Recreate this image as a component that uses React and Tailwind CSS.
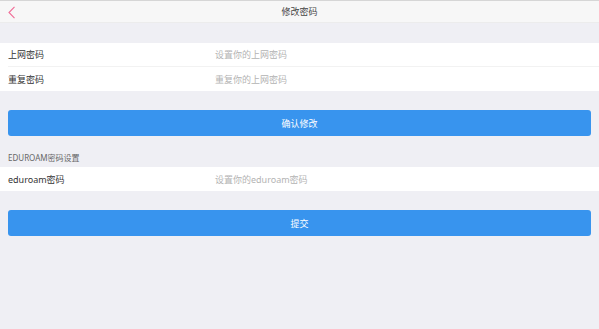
export default function App() {
  const font = { fontFamily: '"Noto Sans", "Noto Sans CJK SC", sans-serif' };
  return (
    <div className="w-full min-h-[329px] bg-[#efeff4]" style={font}>
      <div className="h-px bg-[#d6d6d6]" />
      <div className="h-[22px] bg-[#f7f7f7] flex items-center relative border-b border-[#ececec]">
        <svg className="absolute left-[7px] top-[5px]" width="9" height="13" viewBox="0 0 9 13">
          <polyline points="7.5,0.8 2,6.5 7.5,12.2" fill="none" stroke="#f06c96" strokeWidth="1.1" />
        </svg>
        <div className="flex-1 text-center text-[9px] leading-none text-[#444]">修改密码</div>
      </div>
      <div className="h-[20px]" />
      <div className="bg-white">
        <div className="h-[23px] flex items-center text-[9px] leading-none">
          <div className="pl-2 w-[215px] text-[#333]">上网密码</div>
          <div className="text-[#b3b3b3]">设置你的上网密码</div>
        </div>
        <div className="ml-2 h-px bg-[#f2f2f2]" />
        <div className="h-[24px] flex items-center text-[9px] leading-none">
          <div className="pl-2 w-[215px] text-[#333]">重复密码</div>
          <div className="text-[#b3b3b3]">重复你的上网密码</div>
        </div>
      </div>
      <div className="h-[19px]" />
      <div className="mx-2 h-[26px] rounded-[3px] bg-[#3894ee] flex items-center justify-center text-white text-[9px] leading-none">
        确认修改
      </div>
      <div className="h-[31px] flex items-end pb-[4px] pl-2 text-[8px] leading-[11px] text-[#666]">
        EDUROAM密码设置
      </div>
      <div className="bg-white h-[24px] flex items-center text-[9px] leading-none">
        <div className="pl-2 w-[215px] text-[#333]">eduroam密码</div>
        <div className="text-[#b3b3b3]">设置你的eduroam密码</div>
      </div>
      <div className="h-[19px]" />
      <div className="mx-2 h-[26px] rounded-[3px] bg-[#3894ee] flex items-center justify-center text-white text-[9px] leading-none">
        提交
      </div>
    </div>
  );
}
